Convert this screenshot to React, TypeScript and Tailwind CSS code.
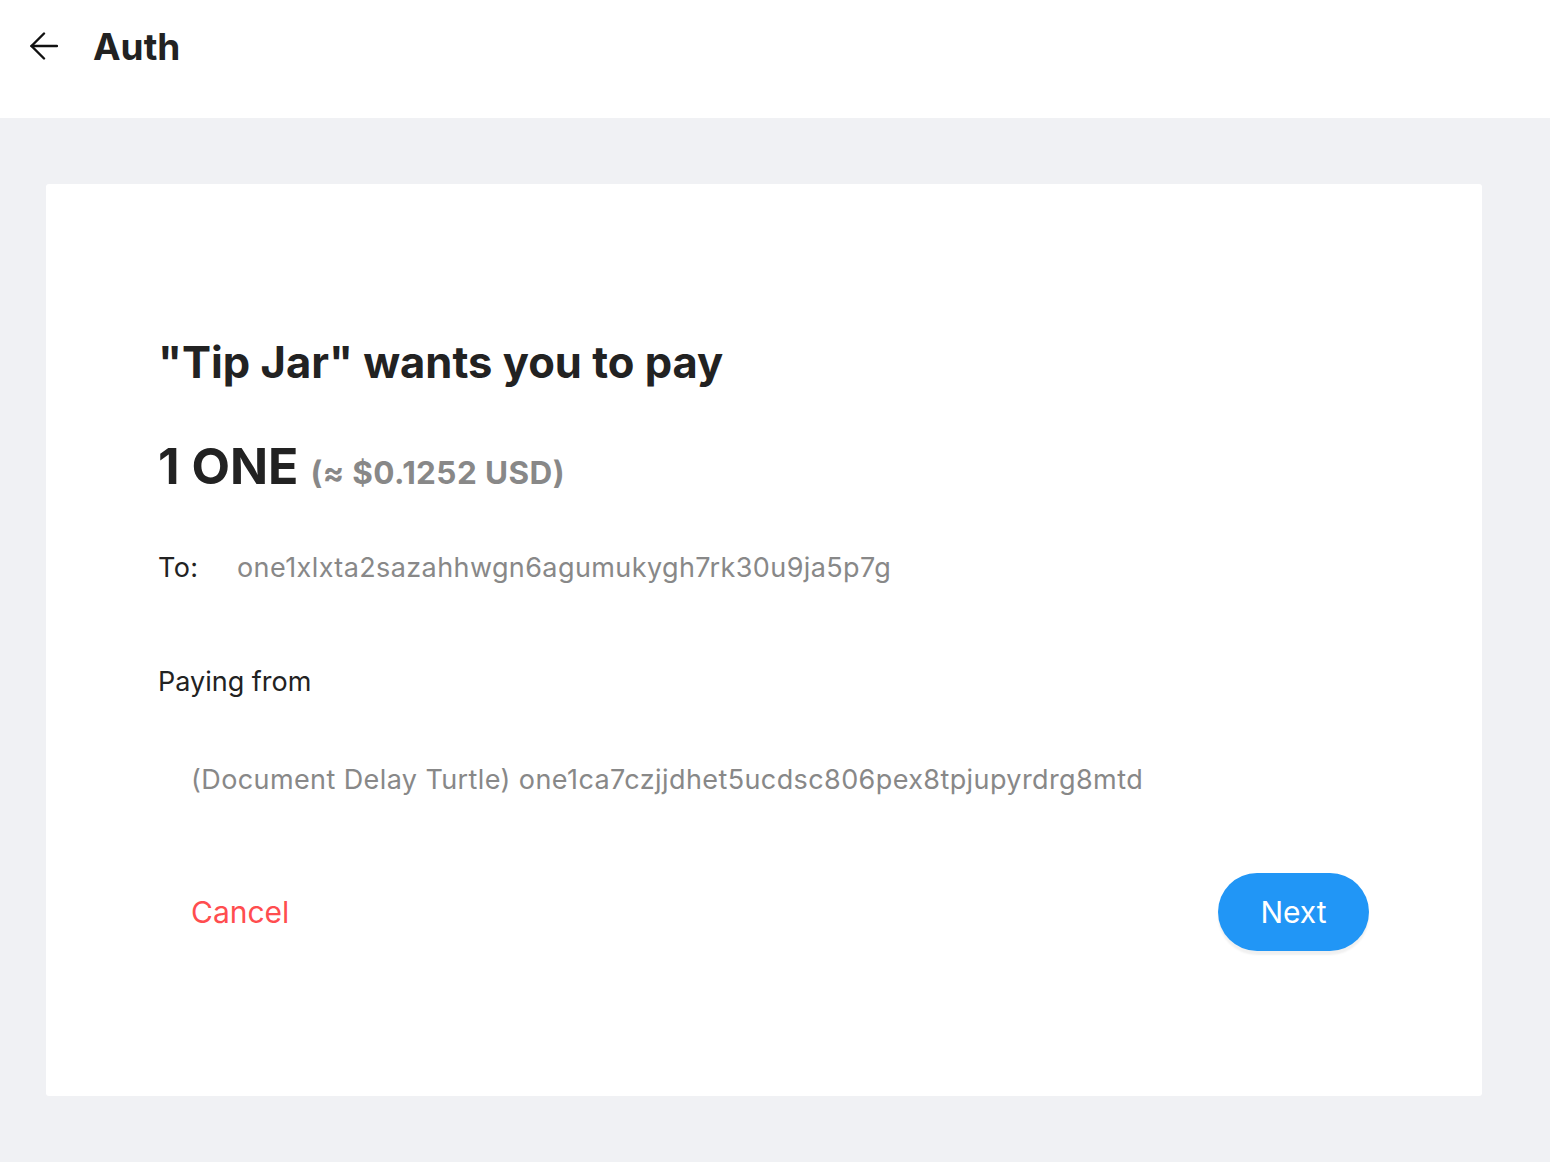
import React from "react";

function BackArrow() {
  return (
    <svg width="28" height="28" viewBox="0 0 28 28" fill="none" stroke="#111" strokeWidth="2.4" strokeLinecap="round" strokeLinejoin="round">
      <path d="M27 14H1.5" />
      <path d="M14 1.5L1.5 14L14 26.5" />
    </svg>
  );
}

export default function App() {
  return (
    <div className="min-h-screen bg-[#f0f1f4] font-['Inter','Roboto',sans-serif] text-[#222]">
      {/* Header */}
      <div className="h-[118px] bg-white">
        <div className="flex h-[92px] items-center gap-[35px] pl-[30px]">
          <button className="flex items-center">
            <BackArrow />
          </button>
          <h1 className="text-[37px] font-bold leading-none text-[#222]">Auth</h1>
        </div>
      </div>

      {/* Card */}
      <div className="ml-[46px] mr-[68px] mt-[66px] h-[912px] rounded-[3px] bg-white pl-[112px] pr-[113px] pt-[153px]">
        <h2 className="text-[43.5px] font-bold leading-[50px] text-[#222]">"Tip Jar" wants you to pay</h2>

        <div className="mt-[51px] flex items-baseline gap-3">
          <span className="text-[50px] font-bold leading-[56px] text-[#222]">1 ONE</span>
          <span className="text-[31.5px] font-bold tracking-[0.4px] text-[#888]">(≈ $0.1252 USD)</span>
        </div>

        <div className="mt-[55px] flex text-[27px] leading-[34px] tracking-[0.4px]">
          <span className="w-[79px] text-[#222]">To:</span>
          <span className="text-[#888]">one1xlxta2sazahhwgn6agumukygh7rk30u9ja5p7g</span>
        </div>

        <div className="mt-[80px] text-[27px] leading-[34px] text-[#222]">Paying from</div>

        <div className="mt-[64px] pl-[33px] text-[27px] leading-[34px] tracking-[0.4px] text-[#888]">
          (Document Delay Turtle) one1ca7czjjdhet5ucdsc806pex8tpjupyrdrg8mtd
        </div>

        <div className="mt-[76px] flex items-center justify-between pl-[33px]">
          <button className="text-[30px] text-[#ff4d4f]">Cancel</button>
          <button className="h-[78px] w-[151px] rounded-full bg-[#2196f6] text-[30px] text-white shadow-[0_4px_2px_rgba(0,0,0,0.06)]">
            Next
          </button>
        </div>
      </div>
    </div>
  );
}
